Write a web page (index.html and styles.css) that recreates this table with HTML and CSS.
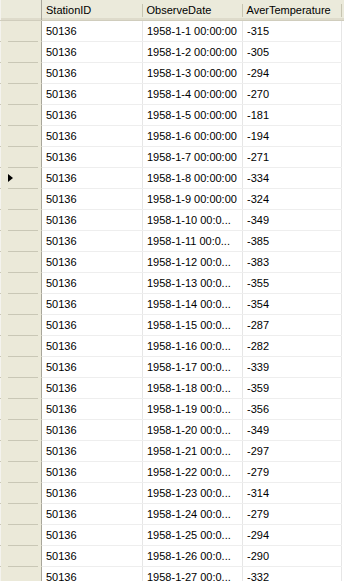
FILE: index.html
```html
<!DOCTYPE html>
<html>
<head>
<meta charset="utf-8">
<link rel="stylesheet" href="styles.css">
</head>
<body>
<table class="grid">
  <colgroup>
    <col class="c-rh"><col class="c-1"><col class="c-2"><col class="c-3"><col class="c-end">
  </colgroup>
  <thead>
    <tr>
      <th class="corner"></th>
      <th class="hd">StationID</th>
      <th class="hd">ObserveDate</th>
      <th class="hd">AverTemperature</th>
      <th class="hd-end"></th>
    </tr>
  </thead>
  <tbody id="rows">
    <tr><td class="rh"></td><td>50136</td><td>1958-1-1 00:00:00</td><td>-315</td><td class="end"></td></tr>
    <tr><td class="rh"></td><td>50136</td><td>1958-1-2 00:00:00</td><td>-305</td><td class="end"></td></tr>
    <tr><td class="rh"></td><td>50136</td><td>1958-1-3 00:00:00</td><td>-294</td><td class="end"></td></tr>
    <tr><td class="rh"></td><td>50136</td><td>1958-1-4 00:00:00</td><td>-270</td><td class="end"></td></tr>
    <tr><td class="rh"></td><td>50136</td><td>1958-1-5 00:00:00</td><td>-181</td><td class="end"></td></tr>
    <tr><td class="rh"></td><td>50136</td><td>1958-1-6 00:00:00</td><td>-194</td><td class="end"></td></tr>
    <tr><td class="rh"></td><td>50136</td><td>1958-1-7 00:00:00</td><td>-271</td><td class="end"></td></tr>
    <tr><td class="rh current"><span class="arrow"></span></td><td>50136</td><td>1958-1-8 00:00:00</td><td>-334</td><td class="end"></td></tr>
    <tr><td class="rh"></td><td>50136</td><td>1958-1-9 00:00:00</td><td>-324</td><td class="end"></td></tr>
    <tr><td class="rh"></td><td>50136</td><td>1958-1-10 00:0...</td><td>-349</td><td class="end"></td></tr>
    <tr><td class="rh"></td><td>50136</td><td>1958-1-11 00:0...</td><td>-385</td><td class="end"></td></tr>
    <tr><td class="rh"></td><td>50136</td><td>1958-1-12 00:0...</td><td>-383</td><td class="end"></td></tr>
    <tr><td class="rh"></td><td>50136</td><td>1958-1-13 00:0...</td><td>-355</td><td class="end"></td></tr>
    <tr><td class="rh"></td><td>50136</td><td>1958-1-14 00:0...</td><td>-354</td><td class="end"></td></tr>
    <tr><td class="rh"></td><td>50136</td><td>1958-1-15 00:0...</td><td>-287</td><td class="end"></td></tr>
    <tr><td class="rh"></td><td>50136</td><td>1958-1-16 00:0...</td><td>-282</td><td class="end"></td></tr>
    <tr><td class="rh"></td><td>50136</td><td>1958-1-17 00:0...</td><td>-339</td><td class="end"></td></tr>
    <tr><td class="rh"></td><td>50136</td><td>1958-1-18 00:0...</td><td>-359</td><td class="end"></td></tr>
    <tr><td class="rh"></td><td>50136</td><td>1958-1-19 00:0...</td><td>-356</td><td class="end"></td></tr>
    <tr><td class="rh"></td><td>50136</td><td>1958-1-20 00:0...</td><td>-349</td><td class="end"></td></tr>
    <tr><td class="rh"></td><td>50136</td><td>1958-1-21 00:0...</td><td>-297</td><td class="end"></td></tr>
    <tr><td class="rh"></td><td>50136</td><td>1958-1-22 00:0...</td><td>-279</td><td class="end"></td></tr>
    <tr><td class="rh"></td><td>50136</td><td>1958-1-23 00:0...</td><td>-314</td><td class="end"></td></tr>
    <tr><td class="rh"></td><td>50136</td><td>1958-1-24 00:0...</td><td>-279</td><td class="end"></td></tr>
    <tr><td class="rh"></td><td>50136</td><td>1958-1-25 00:0...</td><td>-294</td><td class="end"></td></tr>
    <tr><td class="rh"></td><td>50136</td><td>1958-1-26 00:0...</td><td>-290</td><td class="end"></td></tr>
    <tr><td class="rh"></td><td>50136</td><td>1958-1-27 00:0...</td><td>-332</td><td class="end"></td></tr>
  </tbody>
</table>
</body>
</html>
```
FILE: styles.css
```css
html, body {
  margin: 0;
  padding: 0;
  background: #ffffff;
  overflow: hidden;
}
body {
  width: 344px;
  height: 581px;
  font-family: "Liberation Sans", Arial, sans-serif;
  font-size: 11px;
  color: #000000;
}
.grid {
  border-collapse: collapse;
  table-layout: fixed;
  width: 344px;
}
.c-rh { width: 41px; }
.c-1 { width: 101px; }
.c-2 { width: 100px; }
.c-3 { width: 99px; }
.c-end { width: 3px; }

.grid th {
  height: 20px;
  padding: 0;
  background: #ebeadb;
  border-bottom: 1px solid #d0cdbd;
  font-weight: normal;
  text-align: left;
  position: relative;
  box-shadow: inset 0 -2px 0 #dedbcb;
  white-space: nowrap;
  overflow: hidden;
}
.grid th.corner {
  border-left: 1px solid #f4f3ee;
  border-right: 1px solid #a8a69a;
}
.grid th.hd {
  padding-left: 4px;
}
.grid th.hd::after {
  content: "";
  position: absolute;
  right: 0;
  top: 4px;
  height: 13px;
  width: 1px;
  background: #c7c5b2;
  box-shadow: 1px 0 0 #ffffff;
}
.grid td {
  height: 20px;
  padding: 0 0 0 4px;
  border-right: 1px solid #e6e6e6;
  border-bottom: 1px solid #eeeeee;
  white-space: nowrap;
  overflow: hidden;
  vertical-align: middle;
}
.grid td.rh {
  padding: 0;
  background: #ebe9d9;
  border-left: 1px solid #f4f3ee;
  border-right: 1px solid #a8a69a;
  border-bottom: 1px solid #c9c7b6;
  position: relative;
  overflow: visible;
}
.grid td.rh::before,
.grid td.rh::after {
  content: "";
  position: absolute;
  bottom: -1px;
  height: 1px;
  background: #ebe9d9;
}
.grid td.rh::before {
  left: 0;
  width: 7px;
}
.grid td.rh::after {
  right: 0;
  width: 3px;
}
.grid td.end {
  padding: 0;
  border-right: none;
  border-bottom: none;
}
.arrow {
  position: absolute;
  left: 7px;
  top: 6px;
  width: 0;
  height: 0;
  border-top: 4px solid transparent;
  border-bottom: 4px solid transparent;
  border-left: 5px solid #000000;
}
```
